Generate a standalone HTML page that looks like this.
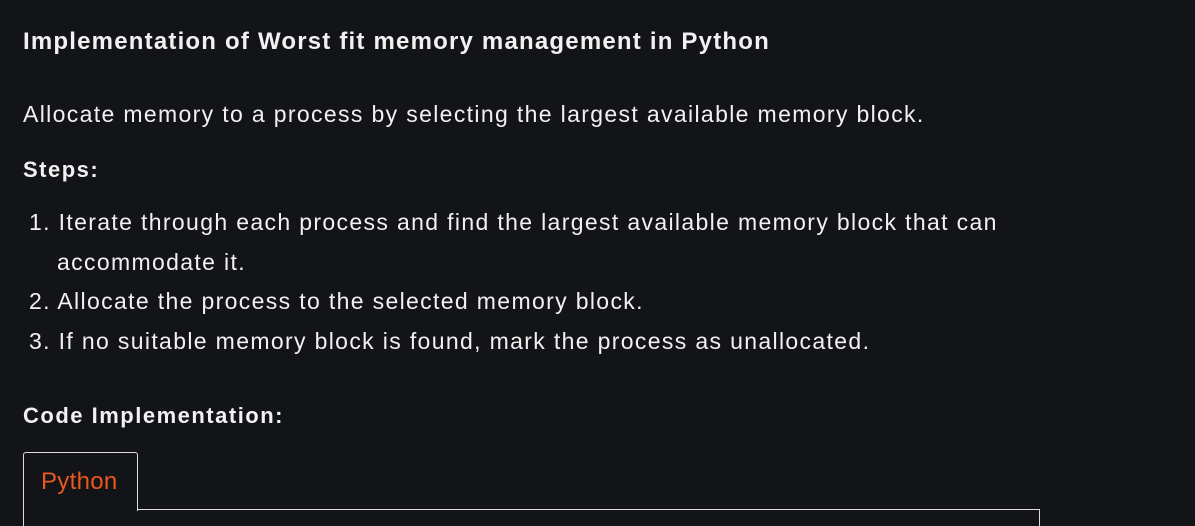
<!DOCTYPE html>
<html><head><meta charset="utf-8"><style>
html,body{margin:0;padding:0;background:#131417;width:1195px;height:526px;overflow:hidden}
body{font-family:"Liberation Sans",sans-serif;color:#f1f1f1;position:relative}
.a{position:absolute;left:23px;white-space:nowrap}
h1{font-size:24px;font-weight:bold;margin:0;letter-spacing:1.2px}
.p{font-size:23px;letter-spacing:1.35px}
.b{font-size:22px;font-weight:bold;letter-spacing:1.5px}
.tab{position:absolute;left:23px;top:452px;width:113px;height:58px;border:1px solid #ddd;border-bottom:none;border-radius:3px 3px 0 0;background:#131417;z-index:2}
.tab span{position:absolute;left:17px;top:15px;color:#e8581f;font-size:24px;letter-spacing:0.3px}
.box{position:absolute;left:23px;top:509px;width:1015px;height:40px;border:1px solid #ddd}
</style></head><body>
<div class="a" style="top:28px"><h1>Implementation of Worst fit memory management in Python</h1></div>
<div class="a p" style="top:101px">Allocate memory to a process by selecting the largest available memory block.</div>
<div class="a b" style="top:157px">Steps:</div>
<div class="a p" style="top:209px;left:29px">1. Iterate through each process and find the largest available memory block that can</div>
<div class="a p" style="top:249px;left:57px">accommodate it.</div>
<div class="a p" style="top:288px;left:29px">2. Allocate the process to the selected memory block.</div>
<div class="a p" style="top:328px;left:29px">3. If no suitable memory block is found, mark the process as unallocated.</div>
<div class="a b" style="top:403px">Code Implementation:</div>
<div class="box"></div>
<div class="tab"><span>Python</span></div>
</body></html>
